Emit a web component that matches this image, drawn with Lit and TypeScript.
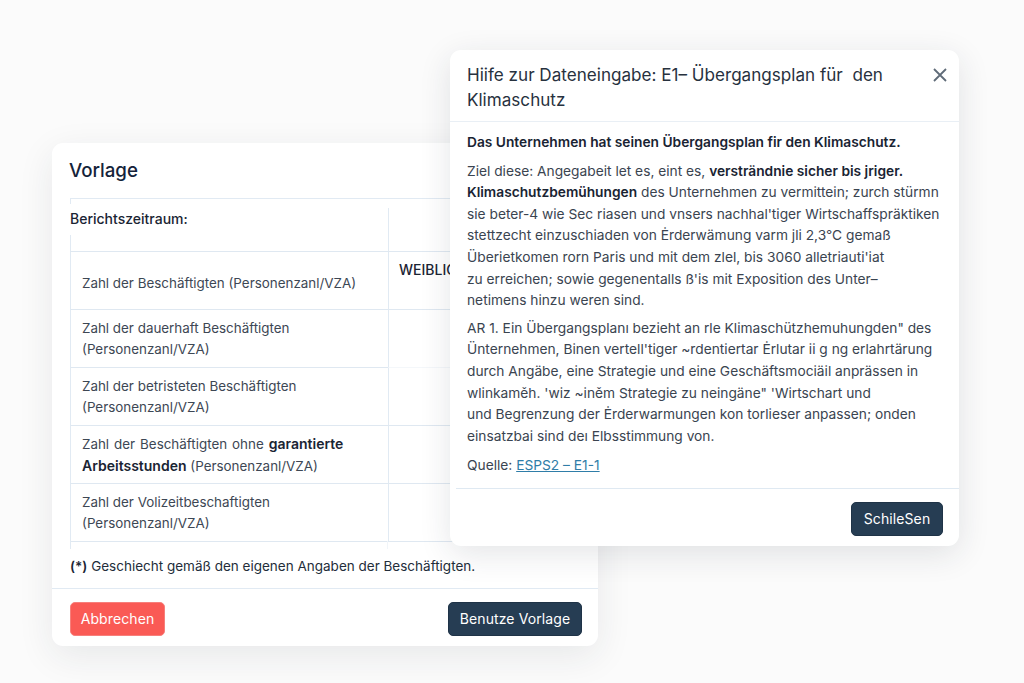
import { LitElement, html, css } from "lit";
import { customElement } from "lit/decorators.js";

const rows = [
  html`Zahl der Beschäftigten (Personenzanl/VZA)`,
  html`Zahl der dauerhaft Beschäftigten<br />(Personenzanl/VZA)`,
  html`Zahl der betristeten Beschäftigten<br />(Personenzanl/VZA)`,
  html`<span class="wide">Zahl der Beschäftigten ohne <b>garantierte</b></span><br /><b>Arbeitsstunden</b> (Personenzanl/VZA)`,
  html`Zahl der Volizeitbeschaftigten<br />(Personenzanl/VZA)`,
];

@customElement("app-root")
export class AppRoot extends LitElement {
  static styles = css`
    :host {
      display: block;
      position: relative;
      width: 1024px;
      height: 683px;
      overflow: hidden;
      box-sizing: border-box;
      padding: 143px 0 0 52px;
      background: #fbfbfb;
      font-family: Inter, "Liberation Sans", sans-serif;
      color: #1f2937;
      font-size: 14px;
    }
    b {
      font-weight: 600;
      color: #1a2433;
    }
    .card {
      background: #fff;
      border-radius: 11px;
      box-shadow: 0 10px 36px rgba(30, 41, 59, 0.09);
    }
    .template {
      width: 546px;
      height: 503px;
      display: flex;
      flex-direction: column;
    }
    .template h2 {
      margin: 0;
      padding: 15px 17px 0;
      height: 40px;
      font-size: 18.7px;
      line-height: 25px;
      font-weight: 500;
      color: #14233a;
    }
    .body {
      margin-left: 18px;
      border-top: 1px solid #e1eaf3;
      flex: none;
      background: linear-gradient(#e1eaf3, #e1eaf3) left top / 1px 5px no-repeat;
    }
    .period {
      display: grid;
      grid-template-columns: 318px 1fr;
      height: 44px;
      margin-top: 9px;
      box-sizing: border-box;
      border-bottom: 1px solid #dfe8f1;
      background: linear-gradient(#e1eaf3, #e1eaf3) left bottom / 1px 16px no-repeat;
    }
    .period span {
      font-weight: 500;
      line-height: 22px;
      color: #1a2433;
    }
    .period i {
      border-left: 1px solid #e1eaf3;
    }
    .row {
      display: grid;
      grid-template-columns: 318px 1fr;
      height: 58px;
      box-sizing: border-box;
    }
    .row .label {
      display: flex;
      align-items: center;
      padding: 1px 0 0 11px;
      border-left: 1px solid #e1eaf3;
      border-bottom: 1px solid #dfe8f1;
      line-height: 21.5px;
      font-size: 13.4px;
      color: #3d4754;
    }
    .row .label b {
      font-size: 14px;
    }
    .row .label .wide {
      word-spacing: 1.2px;
    }
    .row.first .label {
      padding-top: 7px;
    }
    .row .value {
      border-left: 1px solid #e1eaf3;
      border-bottom: 1px solid #dfe8f1;
      padding: 7px 0 0 10px;
      font-weight: 500;
      line-height: 22px;
      color: #1a2433;
    }
    .row .value.faint {
      border-bottom-color: #f4f7fa;
    }
    .stub {
      height: 8px;
      margin: -1px 0 0 18px;
      width: 318px;
      box-sizing: border-box;
      border-left: 1px solid #e1eaf3;
      border-right: 1px solid #f1f5f9;
    }
    .note {
      margin: 6px 0 0 18px;
      font-size: 13.5px;
      line-height: 22px;
      color: #232d3a;
    }
    .template footer {
      margin-top: 11px;
      border-top: 1px solid #e1eaf3;
      padding: 13px 16px 0 18px;
      display: flex;
      justify-content: space-between;
    }
    button {
      height: 34px;
      border: 1px solid transparent;
      border-radius: 5px;
      font: 400 14px/20px Inter, "Liberation Sans", sans-serif;
      color: #fff;
      letter-spacing: 0.1px;
    }
    .cancel {
      width: 95px;
      background: #fa5a55;
      border-color: #f77f7b;
    }
    .primary {
      background: #263d53;
      border-color: #1f3347;
    }
    .use {
      width: 134px;
    }
    .help {
      position: absolute;
      left: 450px;
      top: 50px;
      width: 509px;
      height: 496px;
      display: flex;
      flex-direction: column;
      box-shadow: 0 8px 32px rgba(30, 41, 59, 0.12);
    }
    .help header {
      display: flex;
      justify-content: space-between;
      align-items: flex-start;
      height: 72px;
      box-sizing: border-box;
      padding: 13px 11px 0 17px;
      border-bottom: 1px solid #e9eff5;
    }
    .help h3 {
      margin: 0;
      font-size: 17.1px;
      line-height: 24.6px;
      font-weight: 400;
      color: #27313e;
      white-space: nowrap;
    }
    .close {
      width: 16px;
      height: 16px;
      margin-top: 4px;
      color: #5f6b78;
    }
    .help .content {
      padding: 10px 0 0 17px;
      height: 366px;
      box-sizing: border-box;
      font-size: 13.75px;
      line-height: 21.6px;
      color: #3a4450;
      white-space: nowrap;
    }
    .help p {
      margin: 0 0 7px;
    }
    .help p.ziel {
      margin-bottom: 6px;
    }
    .help p.refs {
      margin-top: 8px;
    }
    .lead {
      font-weight: 600;
      color: #1a2433;
    }
    .help a {
      color: #2f7da8;
      text-decoration: underline;
    }
    .help footer {
      border-top: 1px solid #dfe9f2;
      margin-left: 6px;
      padding: 13px 16px 0 0;
      display: flex;
      justify-content: flex-end;
    }
    .close-btn {
      width: 92px;
    }
  `;

  render() {
    return html`
      <section class="card template">
        <h2>Vorlage</h2>
        <div class="body">
          <div class="period"><span>Berichtszeitraum:</span><i></i></div>
          ${rows.map(
            (r, i) => html`<div class="row ${i === 0 ? "first" : ""}">
              <div class="label"><span>${r}</span></div>
              <div class="value ${i === 1 ? "faint" : ""}">${i === 0 ? "WEIBLICH" : ""}</div>
            </div>`
          )}
        </div>
        <div class="stub"></div>
        <div class="note"><b>(*)</b> Geschiecht gemäß den eigenen Angaben der Beschäftigten.</div>
        <footer>
          <button class="cancel">Abbrechen</button>
          <button class="primary use">Benutze Vorlage</button>
        </footer>
      </section>
      <section class="card help">
        <header>
          <h3>Hiife zur Dateneingabe: E1– Übergangsplan für&nbsp; den<br />Klimaschutz</h3>
          <svg class="close" viewBox="0 0 16 16" fill="none" stroke="currentColor" stroke-width="1.8">
            <path d="M2 2l12 12M14 2L2 14" />
          </svg>
        </header>
        <div class="content">
          <p class="lead">Das Unternehmen hat seinen Übergangsplan fir den Klimaschutz.</p>
          <p class="ziel">
            Ziel diese: Angegabeit let es, eint es, <b>versträndnie sicher bis jriger.</b><br />
            <b>Klimaschutzbemühungen</b> des Unternehmen zu vermittein; zurch stürmn<br />
            sie beter-4 wie Sec riasen und vnsers nachhal'tiger Wirtschaffspräktiken<br />
            stettzecht einzuschiaden von Ėrderwämung varm jli 2,3°C gemaß<br />
            Überietkomen rorn Paris und mit dem zlel, bis 3060 alletriauti'iat<br />
            zu erreichen; sowie gegenentalls ß'is mit Exposition des Unter–<br />
            netimens hinzu weren sind.
          </p>
          <p>
            AR 1. Ein Übergangsplanı bezieht an rle Klimaschützhemuhungden" des<br />
            Ünternehmen, Binen vertell'tiger ~rdentiertar Ėrlutar ii g ng erlahrtärung<br />
            durch Angäbe, eine Strategie und eine Geschäftsmociäil anprässen in<br />
            wlinkaměh. 'wiz ~iněm Strategie zu neingäne" 'Wirtschart und<br />
            und Begrenzung der Ėrderwarmungen kon torlieser anpassen; onden<br />
            einsatzbai sind deı Elbsstimmung von.
          </p>
          <p class="refs">Quelle: <a href="#">ESPS2 – E1-1</a></p>
        </div>
        <footer><button class="primary close-btn">SchileSen</button></footer>
      </section>
    `;
  }
}
